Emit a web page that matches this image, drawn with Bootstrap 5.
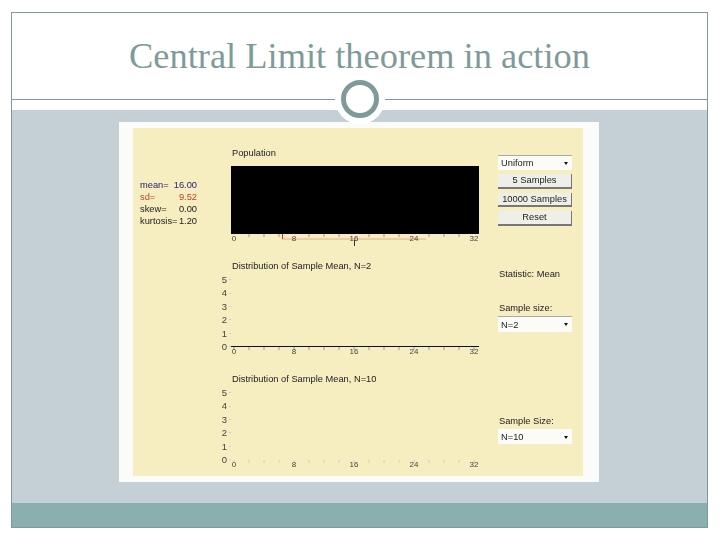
<!DOCTYPE html>
<html lang="en">
<head>
<meta charset="utf-8">
<title>Central Limit theorem in action</title>
<link href="https://cdn.jsdelivr.net/npm/bootstrap@5.3.0/dist/css/bootstrap.min.css" rel="stylesheet">
<style>
html,body{height:540px;overflow:hidden;background:#fff}
.slide-frame{margin:12px 0 0 11px;width:697px;height:516px;border:1px solid #7f9a9a;position:relative;font-family:"Liberation Sans",Arial,sans-serif}
.slide-head{height:87px;border-bottom:1px solid #7f9a9a;margin-bottom:10px}
.slide-title{font-family:"Liberation Serif","Times New Roman",serif;font-size:36.4px;font-weight:400;line-height:40px;color:#7f9a9a;margin:0;padding-top:23px;text-align:center}
.ornament{position:absolute;left:323px;top:61px;width:50px;height:50px;border-radius:50%;background:#fff;display:flex;align-items:center;justify-content:center}
.ornament-ring{width:38px;height:38px;border:5px solid #7f9a9a;border-radius:50%;background:#fff}
.slide-body{background:#c5d0d6;height:393px;padding-top:12px;padding-left:107px}
.slide-foot{background:#8baeae;height:24px}
.app-panel{width:480px;height:360px;background:#fbfbf9;padding:6px 16px 6px 14px}
.app-area{height:348px;background:#f6edc0;color:#222;font-size:9.3px;line-height:12px;filter:blur(.3px)}
.chart-sect{display:grid;grid-template-columns:98px 248px 1fr}
.sect-a{height:132px;padding-top:19px}
.sect-b{height:113px}
.sect-c{height:103px}
.stat-col{padding:32px 0 0 7px}
.stat-row{display:flex;width:57px;justify-content:space-between}
.stat-blue{color:#1f1f6e}
.stat-red{color:#b5482a}
.plot-name{height:12px;margin-bottom:0;padding-left:1px}
.sect-a .plot-name{margin-bottom:7px}
.plot-dark{height:68px;background:#000}
.axis-svg{display:block;overflow:visible}
.axis-svg text{font-size:8px;font-family:"Liberation Sans",Arial,sans-serif;fill:#444;text-anchor:middle}
.y-col{padding-top:13px;font-size:9.5px;color:#444}
.y-lab{height:13.4px;line-height:13.4px;display:flex;justify-content:flex-end;align-items:center;gap:2px}
.y-lab::after{content:"";width:2px;height:1px;background:#ccc}
.ctrl-col{padding-left:19px;width:93px}
.sect-a .ctrl-col{padding-top:8px}
.sim-select{height:15px;width:74px;background:#fbfbf8;border-top:1px solid #aaa;padding:0 4px 0 3px;line-height:14px}
.sim-select-tall{height:16px;margin-top:2px}
.sim-select-plain{border-top-color:#fbfbf8;margin-top:2px}
.sim-caret{width:0;height:0;border-left:2.5px solid transparent;border-right:2.5px solid transparent;border-top:3.5px solid #111}
.sim-btn{width:74px;height:14.5px;padding:0;margin-top:4px;border:0;border-right:1px solid #777;border-bottom:2px solid #777;border-radius:0;background:#efefe9;color:#222;font-size:9.3px;line-height:12px;white-space:nowrap}
.ctrl-text{padding-left:1px;height:12px}
.label-gap-b{margin-top:22px}
.label-gap-c{margin-top:42px}
</style>
</head>
<body>
<div class="slide-frame">
  <header class="slide-head"><h1 class="slide-title">Central Limit theorem in action</h1></header>
  <div class="ornament"><div class="ornament-ring"></div></div>
  <main class="slide-body">
    <div class="app-panel">
      <div class="app-area">
        <section class="chart-sect sect-a">
          <div class="stat-col">
            <div class="stat-row stat-blue"><span>mean=</span><span>16.00</span></div>
            <div class="stat-row stat-red"><span>sd=</span><span>9.52</span></div>
            <div class="stat-row"><span>skew=</span><span>0.00</span></div>
            <div class="stat-row"><span>kurtosis=</span><span>1.20</span></div>
          </div>
          <div>
            <div class="plot-name">Population</div>
            <div class="plot-dark"></div>
            <svg class="axis-svg" width="248" height="14" viewBox="0 0 248 14">
              <path d="M18 0v3M33 0v3M48 0v3M78 0v3M93 0v3M108 0v3M138 0v3M153 0v3M168 0v3M198 0v3M213 0v3M228 0v3" stroke="#999" fill="none"/>
              <path d="M51 5H195" stroke="#f0a888" fill="none"/>
              <path d="M51.5 0v5" stroke="#c33" fill="none"/>
              <path d="M123.5 6v6" stroke="#333" fill="none"/>
              <text x="3" y="7">0</text><text x="63" y="7">8</text><text x="123" y="7">16</text><text x="183" y="7">24</text><text x="243" y="7">32</text>
            </svg>
          </div>
          <div class="ctrl-col">
            <div class="sim-select d-flex justify-content-between align-items-center"><span>Uniform</span><span class="sim-caret"></span></div>
            <button type="button" class="btn sim-btn d-block">5 Samples</button>
            <button type="button" class="btn sim-btn d-block">10000 Samples</button>
            <button type="button" class="btn sim-btn d-block">Reset</button>
          </div>
        </section>
        <section class="chart-sect sect-b">
          <div class="y-col">
            <div class="y-lab">5</div><div class="y-lab">4</div><div class="y-lab">3</div><div class="y-lab">2</div><div class="y-lab">1</div><div class="y-lab">0</div>
          </div>
          <div>
            <div class="plot-name">Distribution of Sample Mean, N=2</div>
            <svg class="axis-svg" width="248" height="82" viewBox="0 0 248 82">
              <path d="M0 74.5H248" stroke="#111" fill="none"/>
              <path d="M3 75v3M18 75v3M33 75v3M48 75v3M63 75v3M78 75v3M93 75v3M108 75v3M123 75v3M138 75v3M153 75v3M168 75v3M183 75v3M198 75v3M213 75v3M228 75v3M243 75v3" stroke="#999" fill="none"/>
              <text x="3" y="82">0</text><text x="63" y="82">8</text><text x="123" y="82">16</text><text x="183" y="82">24</text><text x="243" y="82">32</text>
            </svg>
          </div>
          <div class="ctrl-col">
            <div class="ctrl-text mt-2">Statistic: Mean</div>
            <div class="ctrl-text label-gap-b">Sample size:</div>
            <div class="sim-select sim-select-tall d-flex justify-content-between align-items-center"><span>N=2</span><span class="sim-caret"></span></div>
          </div>
        </section>
        <section class="chart-sect sect-c">
          <div class="y-col">
            <div class="y-lab">5</div><div class="y-lab">4</div><div class="y-lab">3</div><div class="y-lab">2</div><div class="y-lab">1</div><div class="y-lab">0</div>
          </div>
          <div>
            <div class="plot-name">Distribution of Sample Mean, N=10</div>
            <svg class="axis-svg" width="248" height="82" viewBox="0 0 248 82">
              <path d="M3 75v3M18 75v3M33 75v3M48 75v3M63 75v3M78 75v3M93 75v3M108 75v3M123 75v3M138 75v3M153 75v3M168 75v3M183 75v3M198 75v3M213 75v3M228 75v3M243 75v3" stroke="#ccc" fill="none"/>
              <text x="3" y="82">0</text><text x="63" y="82">8</text><text x="123" y="82">16</text><text x="183" y="82">24</text><text x="243" y="82">32</text>
            </svg>
          </div>
          <div class="ctrl-col">
            <div class="ctrl-text label-gap-c">Sample Size:</div>
            <div class="sim-select sim-select-plain d-flex justify-content-between align-items-center"><span>N=10</span><span class="sim-caret"></span></div>
          </div>
        </section>
      </div>
    </div>
  </main>
  <footer class="slide-foot"></footer>
</div>
<script src="https://cdn.jsdelivr.net/npm/bootstrap@5.3.0/dist/js/bootstrap.bundle.min.js"></script>
</body>
</html>
